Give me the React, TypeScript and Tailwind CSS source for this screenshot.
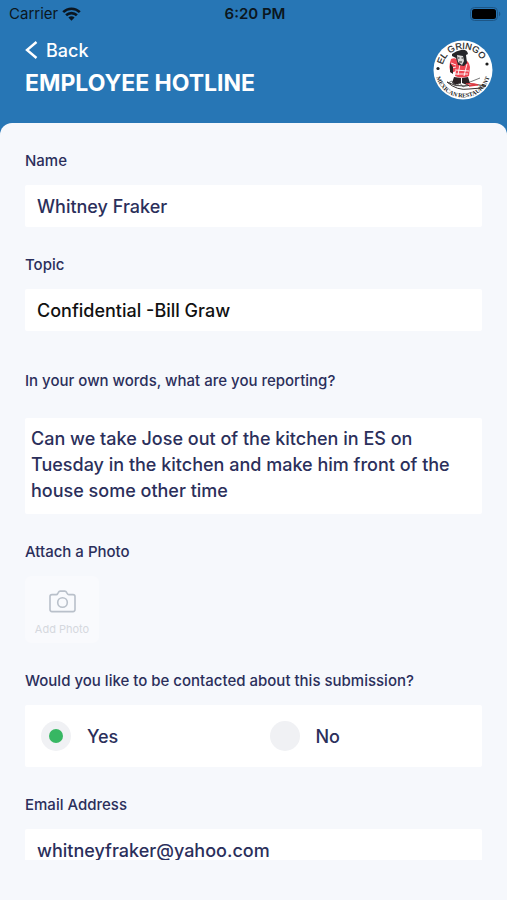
import { useState, type ReactNode } from 'react';

const INPUT = 'block w-full h-[42px] px-3 rounded-xs bg-white text-[18px] font-medium outline-none';

export default function App() {
  const [name, setName] = useState('Whitney Fraker');
  const [topic, setTopic] = useState('Confidential -Bill Graw');
  const [report, setReport] = useState(
    'Can we take Jose out of the kitchen in ES on Tuesday in the kitchen and make him front of the house some other time',
  );
  const [contact, setContact] = useState('yes');
  const [email, setEmail] = useState('whitneyfraker@yahoo.com');

  return (
    <div className="h-screen flex flex-col bg-[#2776b5] font-['Inter',sans-serif] text-[#2b2f5b]">
      <StatusBar />

      <header className="h-[95px] shrink-0 px-[25px] flex items-start justify-between">
        <div className="pt-2 text-white">
          <button type="button" className="flex items-center gap-2 h-7 text-[18px] font-medium">
            <svg width="13" height="18" viewBox="0 0 13 18" fill="none" stroke="currentColor" strokeWidth="2.4">
              <path d="M11.5 1 2 9l9.5 8" />
            </svg>
            Back
          </button>
          <h1 className="mt-1 text-[23px] leading-[30px] font-bold">EMPLOYEE HOTLINE</h1>
        </div>
        <RestaurantLogo />
      </header>

      <main className="flex-1 min-h-0 rounded-t-xl bg-[#f6f8fc] px-[25px] pb-10">
        <form className="h-full overflow-hidden pt-7 flex flex-col gap-7">
          <Field label="Name" id="name">
            <input id="name" className={INPUT} value={name} onChange={(e) => setName(e.target.value)} />
          </Field>

          <Field label="Topic" id="topic">
            <input
              id="topic"
              className={`${INPUT} text-[#111111]`}
              value={topic}
              onChange={(e) => setTopic(e.target.value)}
            />
          </Field>

          <div className="pt-3 shrink-0">
            <label htmlFor="report" className="block text-[15px] leading-5 font-medium">
              In your own words, what are you reporting?
            </label>
            <textarea
              id="report"
              className="block mt-[27px] w-full h-24 py-2 pl-[6px] pr-5 rounded-xs bg-white text-[18px] leading-[26px] font-medium resize-none outline-none overflow-hidden"
              value={report}
              onChange={(e) => setReport(e.target.value)}
            />
          </div>

          <Field label="Attach a Photo" id="photo">
            <button
              id="photo"
              type="button"
              className="w-[74px] h-[67px] rounded-md bg-[#f9fafd] flex flex-col items-center justify-center gap-2 pt-2 text-[11px] leading-4 text-[#d5d8de]"
            >
              <CameraIcon />
              Add Photo
            </button>
          </Field>

          <fieldset className="shrink-0">
            <legend className="text-[15px] leading-5 font-medium">
              Would you like to be contacted about this submission?
            </legend>
            <div className="mt-[14px] h-[62px] rounded-xs bg-white grid grid-cols-2 items-center">
              <Choice label="Yes" value="yes" current={contact} onPick={setContact} />
              <Choice label="No" value="no" current={contact} onPick={setContact} />
            </div>
          </fieldset>

          <Field label="Email Address" id="email">
            <input
              id="email"
              type="email"
              className={INPUT}
              value={email}
              onChange={(e) => setEmail(e.target.value)}
            />
          </Field>
        </form>
      </main>
    </div>
  );
}

function StatusBar() {
  return (
    <div className="h-7 shrink-0 pl-[9px] pr-[6px] grid grid-cols-3 items-center text-[15px] text-[#0b1620]">
      <div className="flex items-center gap-1">
        Carrier
        <svg width="19" height="14" viewBox="0 0 19 14" fill="none" stroke="#0b1620" strokeWidth="2.6">
          <path d="M1.2 5.2a11.8 11.8 0 0 1 16.6 0" />
          <path d="M4.1 8.3a7.7 7.7 0 0 1 10.8 0" />
          <path d="M9.5 13.7 6.4 10.5a4.4 4.4 0 0 1 6.2 0z" fill="#0b1620" stroke="none" />
        </svg>
      </div>
      <div className="text-center font-semibold">6:20 PM</div>
      <svg className="justify-self-end" width="31" height="14" viewBox="0 0 31 14">
        <rect x="0.5" y="0.5" width="27" height="13" rx="4" fill="none" stroke="#1d5686" />
        <rect x="2" y="2" width="24" height="10" rx="2.5" fill="#000" />
        <path d="M29 4.6c1.8.8 1.8 4 0 4.8z" fill="#1d5686" />
      </svg>
    </div>
  );
}

function Field({ label, id, children }: { label: string; id: string; children: ReactNode }) {
  return (
    <div className="shrink-0">
      <label htmlFor={id} className="block mb-[14px] text-[15px] leading-5 font-medium">{label}</label>
      {children}
    </div>
  );
}

function Choice({ label, value, current, onPick }: {
  label: string; value: string; current: string; onPick: (v: string) => void;
}) {
  return (
    <label className="flex items-center gap-4 pl-4 text-[18px] font-medium">
      <input
        type="radio"
        name="contact"
        value={value}
        checked={current === value}
        onChange={() => onPick(value)}
        className="appearance-none size-[30px] rounded-full bg-[#f0f1f4] grid place-content-center checked:before:block checked:before:size-[14px] checked:before:rounded-full checked:before:bg-[#37b763]"
      />
      {label}
    </label>
  );
}

function CameraIcon() {
  return (
    <svg width="27" height="23" viewBox="0 0 27 23" fill="none" stroke="#b9c0ca" strokeWidth="1.6" strokeLinejoin="round">
      <path d="M3 4.6h4.2q1.1 0 1.5-1l.7-1.3q.6-1.200 1.800-1.200h4.600q1.200 0 1.800 1.200l.7 1.300q.5 1 1.500 1H24q2 0 2 2v13q0 2-2 2H3q-2 0-2-2v-13q0-2 2-2z" />
      <circle cx="13.5" cy="12.5" r="4.8" />
    </svg>
  );
}

function RestaurantLogo() {
  return (
    <svg
      className="mt-3 -mr-[11px] shrink-0"
      width="60"
      height="60"
      viewBox="0 0 60 60"
      role="img"
      aria-label="El Gringo Mexican Restaurant"
    >
      <defs>
        <path id="logo-top" d="M9 30a21 21 0 0 1 42 0" />
        <path id="logo-bottom" d="M2.5 30a27.5 27.5 0 0 0 55 0" />
      </defs>
      <circle cx="30" cy="30" r="29.5" fill="#fff" />
      <g fill="#1c1c1c" fontFamily="Liberation Sans, sans-serif">
        <text fontSize="9" textAnchor="middle" stroke="#1c1c1c" strokeWidth="0.2">
          <textPath href="#logo-top" startOffset="46%">EL GRINGO</textPath>
        </text>
        <text fontSize="6" textAnchor="middle" fontFamily="Liberation Serif, serif" fontWeight="700">
          <textPath href="#logo-bottom" startOffset="50%">MEXICAN RESTAURANT</textPath>
        </text>
        <circle cx="5" cy="28.5" r="1.6" />
        <circle cx="54" cy="24" r="1.6" />
      </g>
      {/* figure in the red poncho */}
      <path d="M18 19q4-2 7 1h7q4 1 5 7l-1 9q-7 3-14 0l1-5-5 2q-3-6 0-14z" fill="#ee4652" />
      <path d="M18 23l5 2M22 30l14 1M22 34h13M27 24l-2 11M34 24l-3 12M19 28l4-1" stroke="#fff" strokeWidth="0.9" fill="none" />
      <path d="M19 14q4-3 9-4 6-1 7 4l-2 1 1 8-3 3-6-1-2-7-4-2z" fill="#25262a" />
      <path d="M24 15l6 1 1 5-2 4-4-3z" fill="#d9d9d9" />
      <path d="M25 18h1.500M28.500 18h1.500M26 22h3" stroke="#222" strokeWidth="1" />
      <path d="M17 23l3 4v7l-3-2zM21 37l7 1v5l-6 2-3-2zM29 38l6-1 2 6-3 2-5-2z" fill="#2a2224" />
      <path d="M14 42q8 5 18 4 11-3 21 0-7 3-17 3-12 2-22-7z" fill="none" stroke="#36302f" strokeWidth="1" />
      <path d="M33 44q6-1 12 1M36 46l7-1" stroke="#dd3b43" strokeWidth="1.5" fill="none" />
      <path d="M15 43l4-2 4 5 4-3 3 4 5-3M37 42l10-4" stroke="#555" strokeWidth="0.8" fill="none" />
    </svg>
  );
}
